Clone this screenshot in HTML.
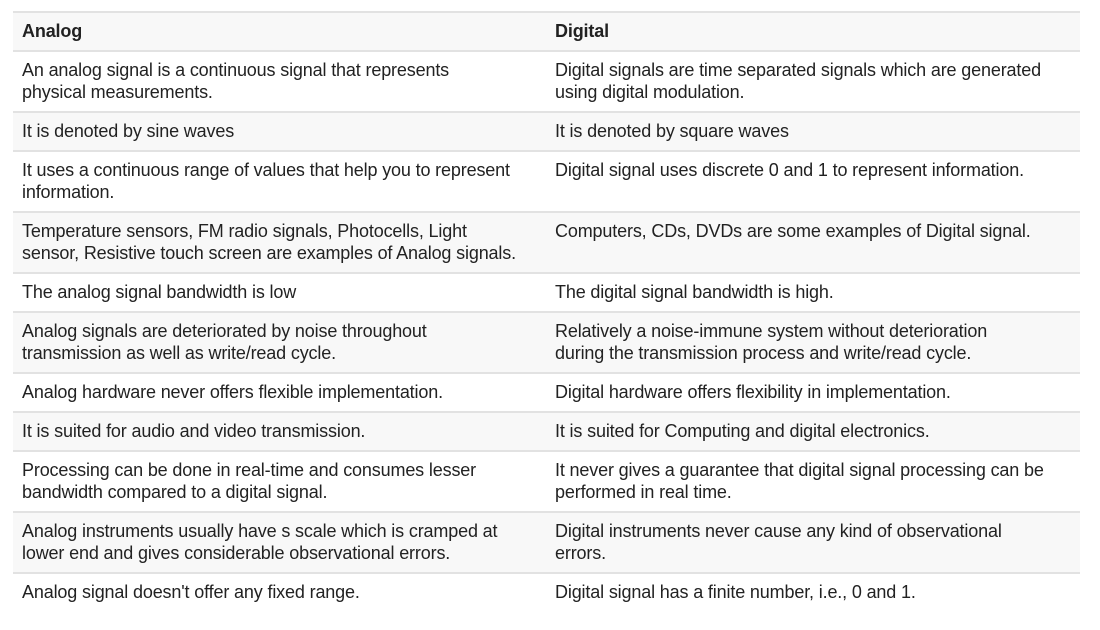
<!DOCTYPE html>
<html><head><style>
body{margin:0;background:#fff;width:1100px;height:630px;overflow:hidden;position:relative}
.t{position:absolute;left:13px;top:11px;width:1067px;font-family:"Liberation Sans",sans-serif;font-size:18px;line-height:22px;color:#222;letter-spacing:-0.15px}
.r{display:flex;border-top:2px solid #e2e2e2;box-sizing:border-box;white-space:nowrap}
.r div{padding:7px 9px 0;box-sizing:border-box}
.r div:first-child{width:533px}
.h{height:39px;background:#f8f8f8;font-weight:bold}
.a{height:61px}.b{height:39px}.g{background:#f8f8f8}
</style></head><body>
<div class="t">
<div class="r h"><div>Analog</div><div>Digital</div></div>
<div class="r a"><div>An analog signal is a continuous signal that represents<br>physical measurements.</div><div>Digital signals are time separated signals which are generated<br>using digital modulation.</div></div>
<div class="r b g"><div>It is denoted by sine waves</div><div>It is denoted by square waves</div></div>
<div class="r a"><div>It uses a continuous range of values that help you to represent<br>information.</div><div>Digital signal uses discrete 0 and 1 to represent information.</div></div>
<div class="r a g"><div>Temperature sensors, FM radio signals, Photocells, Light<br>sensor, Resistive touch screen are examples of Analog signals.</div><div>Computers, CDs, DVDs are some examples of Digital signal.</div></div>
<div class="r b"><div>The analog signal bandwidth is low</div><div>The digital signal bandwidth is high.</div></div>
<div class="r a g"><div>Analog signals are deteriorated by noise throughout<br>transmission as well as write/read cycle.</div><div>Relatively a noise-immune system without deterioration<br>during the transmission process and write/read cycle.</div></div>
<div class="r b"><div>Analog hardware never offers flexible implementation.</div><div>Digital hardware offers flexibility in implementation.</div></div>
<div class="r b g"><div>It is suited for audio and video transmission.</div><div>It is suited for Computing and digital electronics.</div></div>
<div class="r a"><div>Processing can be done in real-time and consumes lesser<br>bandwidth compared to a digital signal.</div><div>It never gives a guarantee that digital signal processing can be<br>performed in real time.</div></div>
<div class="r a g"><div>Analog instruments usually have s scale which is cramped at<br>lower end and gives considerable observational errors.</div><div>Digital instruments never cause any kind of observational<br>errors.</div></div>
<div class="r b"><div>Analog signal doesn't offer any fixed range.</div><div>Digital signal has a finite number, i.e., 0 and 1.</div></div>
</div>
</body></html>
